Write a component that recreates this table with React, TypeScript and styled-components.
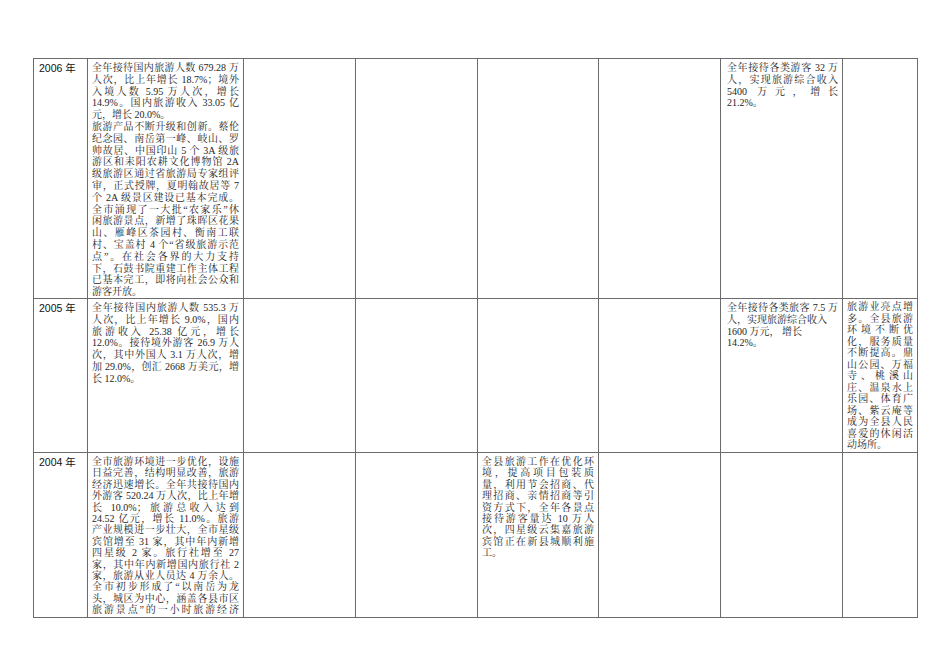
import React from 'react';
import styled, { createGlobalStyle } from 'styled-components';

const GlobalStyle = createGlobalStyle`
    html, body {
        margin: 0;
        padding: 0;
        background: #ffffff;
    }
`;

const Page = styled.div`
    width: 950px;
    height: 672px;
    padding: 58px 0 0 33px;
    box-sizing: border-box;
    background: #ffffff;
    overflow: hidden;
`;

const Table = styled.div`
    display: grid;
    grid-template-columns: 54px 156px 112px 122px 121px 122px 122px 75px;
    grid-template-rows: 240px 154px 165px;
    width: 885px;
    border-top: 1px solid #6b6b6b;
    border-left: 1px solid #6b6b6b;
    box-sizing: border-box;
`;

const Cell = styled.div<{ $lh?: number; $pl?: number; $pt?: number }>`
    box-sizing: border-box;
    border-right: 1px solid #6b6b6b;
    border-bottom: 1px solid #6b6b6b;
    padding: ${p => p.$pt ?? 3}px 4px 0 ${p => p.$pl ?? 4}px;
    overflow: hidden;
    font-family: "Liberation Serif", "Noto Serif CJK SC", "Noto Sans CJK SC", serif;
    font-size: 10px;
    line-height: ${p => p.$lh ?? 11.8}px;
    color: #1e1e1e;
`;

const Year = styled.div`
    font-family: "Liberation Sans", "Noto Sans CJK SC", sans-serif;
    font-size: 10.5px;
    line-height: 12px;
    padding-left: 1px;
    color: #111;
`;

const Line = styled.span<{ $end?: boolean }>`
    display: block;
    white-space: nowrap;
    text-align: justify;
    text-align-last: ${p => (p.$end ? 'left' : 'justify')};
`;

type Para = { lines: string[]; end?: boolean };

// each paragraph keeps the reference's own line breaks
const Text = ({ paras }: { paras: Para[] }) => (
    <>
        {paras.map((para, i) =>
            para.lines.map((l, j) => (
                <Line key={`${i}-${j}`} $end={para.end !== false && j === para.lines.length - 1}>
                    {l}
                </Line>
            ))
        )}
    </>
);

const text2006: Para[] = [
    {
        lines: [
            '全年接待国内旅游人数 679.28 万',
            '人次，比上年增长 18.7%；境外',
            '入境人数 5.95 万人次，增长',
            '14.9%。国内旅游收入 33.05 亿',
            '元，增长 20.0%。',
        ],
    },
    {
        lines: [
            '旅游产品不断升级和创新。蔡伦',
            '纪念园、南岳第一峰、岐山、罗',
            '帅故居、中国印山 5 个 3A 级旅',
            '游区和耒阳农耕文化博物馆 2A',
            '级旅游区通过省旅游局专家组评',
            '审，正式授牌，夏明翰故居等 7',
            '个 2A 级景区建设已基本完成。',
        ],
        end: false,
    },
    {
        lines: [
            '全市涌现了一大批“农家乐”休',
            '闲旅游景点，新增了珠晖区花果',
            '山、雁峰区茶园村、衡南工联',
            '村、宝盖村 4 个“省级旅游示范',
            '点”。在社会各界的大力支持',
            '下，石鼓书院重建工作主体工程',
            '已基本完工，即将向社会公众和',
            '游客开放。',
        ],
    },
];

const county2006: Para[] = [
    { lines: ['全年接待各类游客 32 万', '人，实现旅游综合收入', '5400 万元，增长', '21.2%。'] },
];

const text2005: Para[] = [
    {
        lines: [
            '全年接待国内旅游人数 535.3 万',
            '人次，比上年增长 9.0%，国内',
            '旅游收入 25.38 亿元，增长',
            '12.0%。接待境外游客 26.9 万人',
            '次，其中外国人 3.1 万人次，增',
            '加 29.0%，创汇 2668 万美元，增',
            '长 12.0%。',
        ],
    },
];

const county2005: Para[] = [
    { lines: ['全年接待各类旅客 7.5 万', '人，实现旅游综合收入'] },
    { lines: ['1600 万元， 增长'] },
    { lines: ['14.2%。'] },
];

const note2005: Para[] = [
    {
        lines: [
            '旅游业亮点增',
            '多。全县旅游',
            '环境不断优',
            '化，服务质量',
            '不断提高。鼎',
            '山公园、万福',
            '寺、桃溪山',
            '庄、温泉水上',
            '乐园、体育广',
            '场、紫云庵等',
            '成为全县人民',
            '喜爱的休闲活',
            '动场所。',
        ],
    },
];

const text2004: Para[] = [
    {
        lines: [
            '全市旅游环境进一步优化，设施',
            '日益完善，结构明显改善，旅游',
            '经济迅速增长。全年共接待国内',
            '外游客 520.24 万人次，比上年增',
            '长 10.0%；旅游总收入达到',
            '24.52 亿元，增长 11.0%。旅游',
            '产业规模进一步壮大，全市星级',
            '宾馆增至 31 家，其中年内新增',
            '四星级 2 家。旅行社增至 27',
            '家，其中年内新增国内旅行社 2',
            '家，旅游从业人员达 4 万余人。',
        ],
        end: false,
    },
    {
        lines: [
            '全市初步形成了“以南岳为龙',
            '头，城区为中心，涵盖各县市区',
            '旅游景点”的一小时旅游经济',
        ],
        end: false,
    },
];

const county2004: Para[] = [
    {
        lines: [
            '全县旅游工作在优化环',
            '境，提高项目包装质',
            '量，利用节会招商、代',
            '理招商、亲情招商等引',
            '资方式下，全年各景点',
            '接待游客量达 10 万人',
            '次，四星级云集嘉旅游',
            '宾馆正在新县城顺利施',
            '工。',
        ],
    },
];

const App = () => {
    return (
        <Page>
            <GlobalStyle />
            <Table>
                <Cell><Year>2006 年</Year></Cell>
                <Cell><Text paras={text2006} /></Cell>
                <Cell />
                <Cell />
                <Cell />
                <Cell />
                <Cell $pl={6}><Text paras={county2006} /></Cell>
                <Cell />

                <Cell><Year>2005 年</Year></Cell>
                <Cell><Text paras={text2005} /></Cell>
                <Cell />
                <Cell />
                <Cell />
                <Cell />
                <Cell $pl={6}><Text paras={county2005} /></Cell>
                <Cell $pt={2} $lh={11.5}><Text paras={note2005} /></Cell>

                <Cell $lh={11.4}><Year>2004 年</Year></Cell>
                <Cell $lh={11.4}><Text paras={text2004} /></Cell>
                <Cell />
                <Cell />
                <Cell $lh={11.4}><Text paras={county2004} /></Cell>
                <Cell />
                <Cell />
                <Cell />
            </Table>
        </Page>
    );
};

export default App;
